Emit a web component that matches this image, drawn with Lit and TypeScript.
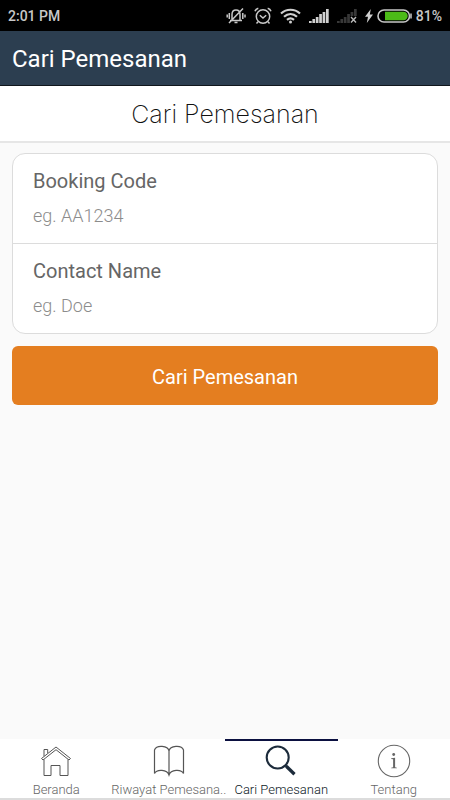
import { LitElement, html, css, svg } from "lit";
import { customElement, state } from "lit/decorators.js";
import { classMap } from "lit/directives/class-map.js";

const silentIcon = html`<svg width="20" height="18" viewBox="0 0 20 18" fill="none" stroke="#c8c8c8" stroke-width="1.5">
  <path d="M4 13.500h12M6 13V7.500C6 4.500 7.700 3 10 3s4 1.500 4 4.500V13M8.500 15.500h3M17 1.500L3 16"/>
  <path d="M3.300 6v6M16.800 6v6M1.200 7.500v3M19 7.500v3"/>
</svg>`;

const alarmIcon = html`<svg width="18" height="18" viewBox="0 0 18 18" fill="none" stroke="#c8c8c8" stroke-width="1.5">
  <circle cx="9" cy="9.500" r="6.700"/>
  <path d="M5.800 8.200L9 11l3.200-2.800M1 4.300C1.500 2.800 2.700 1.700 4.300 1.300M17 4.300c-.5-1.500-1.700-2.600-3.300-3M4 14.800l-1.500 1.700M14 14.800l1.500 1.700"/>
</svg>`;

const wifiIcon = html`<svg width="21" height="16" viewBox="0 0 21 16" fill="none" stroke="#d0d0d0" stroke-width="2.200">
  <path d="M1 5.500c5.500-5 13.500-5 19 0M4 8.800c4-3.600 9-3.600 13 0M7 11.800c2.200-1.900 4.800-1.900 7 0"/>
  <circle cx="10.500" cy="14" r="1.500" fill="#d0d0d0" stroke="none"/>
</svg>`;

const bars = [2, 4, 6, 9, 11, 14];
const signal = (color: string, missing: boolean) => html`<svg width="20" height="15" viewBox="0 0 20 15">
  ${bars.map((h, i) => svg`<rect x=${i * 3.4} y=${15 - h} width="2.7" height=${h} fill=${color}/>`)}
  ${missing ? svg`<path d="M13 8h7v7h-7z" fill="#000"/><path d="M14 9l5 5.500M19 9l-5 5.500" stroke="#b8b8b8" stroke-width="1.400"/>` : ""}
</svg>`;

const chargeIcon = html`<svg width="8" height="14" viewBox="0 0 8 14"><path d="M5.800 0L0 7.800h3L1.800 14 8 5.500H4.800z" fill="#d0d0d0"/></svg>`;

const batteryIcon = html`<svg width="35" height="14" viewBox="0 0 35 14">
  <rect x="1" y="1" width="31.500" height="12" rx="6" fill="#000" stroke="#c8c8c8" stroke-width="1.600"/>
  <path d="M34 4.500v5" stroke="#c8c8c8" stroke-width="1.500"/>
  <path d="M8 2.800h18.500a4.200 4.200 0 0 1 0 8.400H8z" fill="#4cbb17"/>
</svg>`;

const homeIcon = html`<svg width="34" height="34" viewBox="0 0 34 34" fill="none" stroke="#555" stroke-width="1">
  <path d="M2.500 14.500L17 3l14.500 11.500M4 16L17 5.700 30 16M2.500 14.500L4 16M31.500 14.500L30 16"/>
  <path d="M5 12.200V5.500h3.700v3.500M5 15.500V31.500h7V21.500h9v10h8V15.500"/>
</svg>`;

const bookIcon = html`<svg width="34" height="34" viewBox="0 0 34 34" fill="none" stroke="#555" stroke-width="1.200">
  <path d="M17 7c-1-5.500-12.500-6.300-14.500-1v23.500c2.300-4.700 12.700-4.200 14.500 1.500 1.800-5.700 12.200-6.200 14.500-1.500V6C29.500.7 18 1.500 17 7zM17 7v24"/>
</svg>`;

const searchIcon = html`<svg width="34" height="34" viewBox="0 0 34 34" fill="none" stroke="#1c2b3b">
  <circle cx="13.700" cy="13.500" r="11" stroke-width="2.100"/>
  <path d="M21 21l2.500 2.500" stroke-width="2"/>
  <path d="M22.300 22.300l8.200 8" stroke-width="3.300"/>
</svg>`;

const infoIcon = html`<svg width="34" height="34" viewBox="0 0 34 34" fill="none">
  <circle cx="17" cy="17" r="15.700" stroke="#666" stroke-width="1.100"/>
  <circle cx="16.700" cy="10.500" r="1.400" fill="#666"/>
  <path d="M14.200 14.300l3.900-.5v9.400l1.800.5v.6h-5.700v-.6l1.900-.5v-7.900l-1.900-.4z" fill="#666"/>
</svg>`;

const tabs = [
  { label: "Beranda", icon: homeIcon },
  { label: "Riwayat Pemesana..", icon: bookIcon },
  { label: "Cari Pemesanan", icon: searchIcon },
  { label: "Tentang", icon: infoIcon },
];

@customElement("app-root")
export class AppRoot extends LitElement {
  @state() private active = 2;

  static styles = css`
    :host {
      display: flex;
      flex-direction: column;
      min-height: 100vh;
      background: #fafafa;
      font-family: Roboto, "Liberation Sans", sans-serif;
    }
    .status {
      display: flex;
      align-items: center;
      justify-content: space-between;
      height: 31px;
      padding: 0 8px;
      background: #000;
      color: #c8c8c8;
      font-size: 14px;
      font-weight: 500;
    }
    .indicators {
      display: flex;
      align-items: center;
      gap: 8px;
    }
    .power {
      display: flex;
      align-items: center;
      gap: 4px;
    }
    .appbar {
      height: 54px;
      line-height: 56px;
      padding: 0 12px;
      background: #2c3e50;
      border-bottom: 1px solid #10161c;
      color: #fff;
      font-size: 24px;
    }
    h1 {
      margin: 0;
      height: 55px;
      line-height: 57px;
      background: #fff;
      border-bottom: 2px solid #e6e6e6;
      color: #111;
      text-align: center;
      font-family: Inter, "Liberation Sans", sans-serif;
      font-size: 25px;
      font-weight: 200;
    }
    form {
      display: flex;
      flex-direction: column;
      flex: 1;
      gap: 12px;
      padding: 10px 12px;
    }
    .card {
      background: #fff;
      border: 1px solid #dcdcdc;
      border-radius: 13px;
    }
    .field {
      display: flex;
      flex-direction: column;
      gap: 11px;
      padding: 15px 20px 17px;
    }
    .field + .field {
      border-top: 1px solid #dcdcdc;
    }
    label {
      color: #666;
      font-size: 20px;
      line-height: 24px;
    }
    input {
      width: 100%;
      height: 22px;
      padding: 0;
      border: 0;
      outline: 0;
      background: none;
      color: #444;
      font-family: inherit;
      font-size: 18px;
      font-weight: 300;
    }
    input::placeholder {
      color: #8c8c8c;
      opacity: 1;
    }
    .submit {
      height: 59px;
      padding: 2px 0 0;
      border: 0;
      border-radius: 6px;
      background: #e47e20;
      color: #fff;
      font-family: inherit;
      font-size: 20px;
    }
    nav {
      display: grid;
      grid-template-columns: repeat(4, minmax(0, 1fr));
      background: #fff;
      border-bottom: 2px solid #dcdcdc;
    }
    .tab {
      display: flex;
      flex-direction: column;
      align-items: center;
      gap: 4px;
      padding: 3px 0 0;
      border: 0;
      border-top: 2px solid transparent;
      background: none;
      color: #666;
      font-family: inherit;
      font-size: 13px;
      font-weight: 300;
      line-height: 16px;
      white-space: nowrap;
    }
    .active {
      border-top-color: #0b1040;
      color: #0c1826;
    }
    svg {
      display: block;
      flex: none;
    }
  `;

  render() {
    return html`
      <div class="status">
        <span>2:01 PM</span>
        <div class="indicators">
          ${silentIcon}${alarmIcon}${wifiIcon}${signal("#d0d0d0", false)}${signal("#383838", true)}
          <div class="power">${chargeIcon}${batteryIcon}<span>81%</span></div>
        </div>
      </div>
      <header class="appbar">Cari Pemesanan</header>
      <h1>Cari Pemesanan</h1>
      <form @submit=${(e: Event) => e.preventDefault()}>
        <div class="card">
          <div class="field">
            <label for="code">Booking Code</label>
            <input id="code" type="text" placeholder="eg. AA1234" />
          </div>
          <div class="field">
            <label for="name">Contact Name</label>
            <input id="name" type="text" placeholder="eg. Doe" />
          </div>
        </div>
        <button class="submit" type="submit">Cari Pemesanan</button>
      </form>
      <nav>
        ${tabs.map(
          (t, i) => html`<button
            type="button"
            class=${classMap({ tab: true, active: i === this.active })}
            @click=${() => (this.active = i)}
          >
            ${t.icon}<span>${t.label}</span>
          </button>`
        )}
      </nav>
    `;
  }
}
